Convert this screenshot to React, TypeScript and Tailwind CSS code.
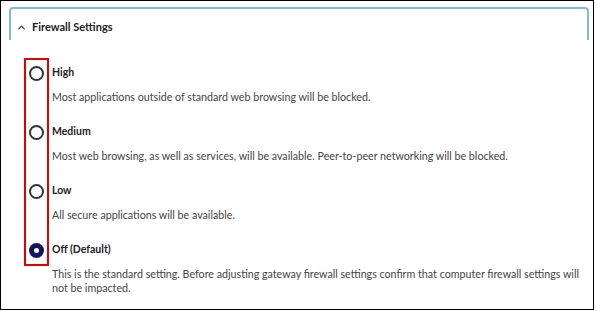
import { ChevronUp } from 'lucide-react';

const options = [
  {
    label: 'High',
    lines: ['Most applications outside of standard web browsing will be blocked.'],
    checked: false,
  },
  {
    label: 'Medium',
    lines: ['Most web browsing, as well as services, will be available. Peer-to-peer networking will be blocked.'],
    checked: false,
  },
  {
    label: 'Low',
    lines: ['All secure applications will be available.'],
    checked: false,
  },
  {
    label: 'Off (Default)',
    lines: [
      'This is the standard setting. Before adjusting gateway firewall settings confirm that computer firewall settings will',
      'not be impacted.',
    ],
    checked: true,
  },
];

function Radio({ checked }: { checked: boolean }) {
  if (checked) {
    return (
      <span className="flex h-[15px] w-[15px] shrink-0 items-center justify-center rounded-full bg-[#12175a]">
        <span className="h-[5px] w-[5px] rounded-full bg-white" />
      </span>
    );
  }
  return <span className="h-[15px] w-[15px] shrink-0 rounded-full border-2 border-[#333]" />;
}

export default function App() {
  return (
    <div
      className="relative h-[311px] w-[597px] bg-white text-[#2a2a2a]"
      style={{ fontFamily: 'Lato, "Open Sans", sans-serif' }}
    >
      <div className="relative h-[310px] w-[594px] border border-black pl-[8px] pr-[4px] pt-[6px]">
        <div className="flex h-[33px] items-center rounded-t-[4px] border-2 border-b-0 border-[#88b8d8] pl-[5px] pt-[6px]">
          <ChevronUp className="h-[11px] w-[11px] text-[#2c3e60]" strokeWidth={3} />
          <span className="ml-[5px] text-[11px] font-bold text-[#222]">Firewall Settings</span>
        </div>

        <div className="flex flex-col gap-[20px] pl-[20px] pt-[25px]">
          {options.map((o) => (
            <div key={o.label} className="flex flex-col">
              <div className="flex h-[16px] items-center gap-[8px]">
                <Radio checked={o.checked} />
                <span className="text-[10.5px] font-bold text-[#222]">{o.label}</span>
              </div>
              <div className="mt-[9px] whitespace-nowrap pl-[23px] text-[10.7px] leading-[14px] text-[#444]">
                {o.lines.map((l) => (
                  <div key={l}>{l}</div>
                ))}
              </div>
            </div>
          ))}
        </div>

        <div className="absolute left-[23px] top-[57px] h-[208px] w-[25px] border-2 border-[#e00000]" />
      </div>
    </div>
  );
}
